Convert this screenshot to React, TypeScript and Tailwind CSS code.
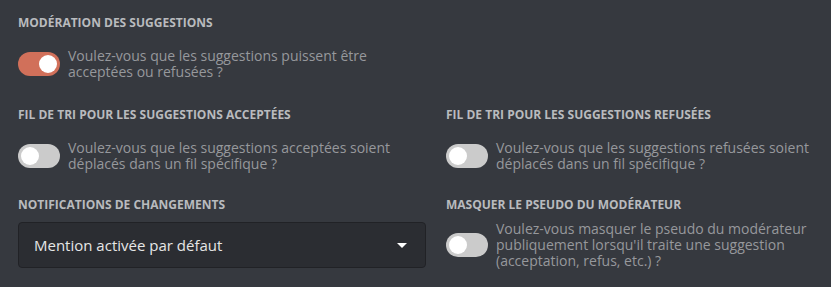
import React, { useState } from "react";

function Toggle({ on, onChange }: { on: boolean; onChange: () => void }) {
  return (
    <button
      type="button"
      onClick={onChange}
      className={`relative shrink-0 w-[42px] h-[24px] rounded-full transition-colors ${
        on ? "bg-[#d1705a]" : "bg-[#cbcbcb]"
      }`}
    >
      <span
        className={`absolute top-[3px] w-[18px] h-[18px] rounded-full bg-white transition-all ${
          on ? "left-[21px]" : "left-[3px]"
        }`}
      />
    </button>
  );
}

function Option({
  title,
  text,
  on,
  onChange,
}: {
  title: string;
  text: string;
  on: boolean;
  onChange: () => void;
}) {
  return (
    <div>
      <h3 className="text-[12px] leading-[16px] font-bold uppercase text-[#b9bbbe]">
        {title}
      </h3>
      <div className="mt-[17px] flex items-center gap-[8px]">
        <Toggle on={on} onChange={onChange} />
        <p className="text-[14px] leading-[16px] text-[#96989c]">{text}</p>
      </div>
    </div>
  );
}

export default function App() {
  const [moderation, setModeration] = useState(true);
  const [accepted, setAccepted] = useState(false);
  const [refused, setRefused] = useState(false);
  const [hideMod, setHideMod] = useState(false);

  return (
    <div
      className="min-h-screen bg-[#36393f] px-[18px] pt-[15px]"
      style={{ fontFamily: '"Open Sans", "Noto Sans", sans-serif' }}
    >
      <div className="w-[390px]">
        <Option
          title="Modération des suggestions"
          text="Voulez-vous que les suggestions puissent être acceptées ou refusées ?"
          on={moderation}
          onChange={() => setModeration(!moderation)}
        />
      </div>

      <div className="mt-[27px] grid grid-cols-[408px_1fr] gap-x-[20px]">
        <Option
          title="Fil de tri pour les suggestions acceptées"
          text="Voulez-vous que les suggestions acceptées soient déplacés dans un fil spécifique ?"
          on={accepted}
          onChange={() => setAccepted(!accepted)}
        />
        <Option
          title="Fil de tri pour les suggestions refusées"
          text="Voulez-vous que les suggestions refusées soient déplacés dans un fil spécifique ?"
          on={refused}
          onChange={() => setRefused(!refused)}
        />
      </div>

      <div className="mt-[25px] grid grid-cols-[408px_1fr] gap-x-[20px]">
        <div>
          <h3 className="text-[12px] leading-[16px] font-bold uppercase text-[#b9bbbe]">
            Notifications de changements
          </h3>
          <button
            type="button"
            className="mt-[9px] w-full h-[46px] flex items-center justify-between pl-[15px] pr-[18px] rounded-[4px] bg-[#2b2d32] border border-[#212226] text-[15px] text-[#e6e6e6]"
          >
            <span>Mention activée par défaut</span>
            <svg width="10" height="5" viewBox="0 0 10 5">
              <path d="M0 0H10L5 5Z" fill="#ffffff" />
            </svg>
          </button>
        </div>
        <div>
          <h3 className="text-[12px] leading-[16px] font-bold uppercase text-[#b9bbbe]">
            Masquer le pseudo du modérateur
          </h3>
          <div className="mt-[8px] flex items-center gap-[8px]">
            <Toggle on={hideMod} onChange={() => setHideMod(!hideMod)} />
            <p className="text-[14px] leading-[16px] text-[#96989c]">
              Voulez-vous masquer le pseudo du modérateur publiquement lorsqu'il
              traite une suggestion (acceptation, refus, etc.) ?
            </p>
          </div>
        </div>
      </div>
    </div>
  );
}
